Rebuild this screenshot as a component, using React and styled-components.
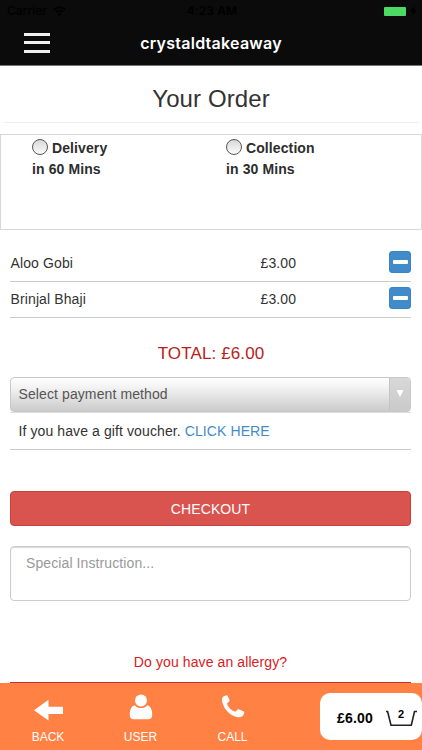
import React from "react";
import styled, { createGlobalStyle } from "styled-components";

const Global = createGlobalStyle`
  * { box-sizing: border-box; }
  html, body { margin: 0; padding: 0; }
  body {
    background: #fff;
    color: #333;
    font-family: "Liberation Sans", Arial, sans-serif;
    font-size: 14px;
    overflow: hidden;
  }
`;

const Screen = styled.div`
  width: 422px;
  height: 750px;
  display: flex;
  flex-direction: column;
  overflow: hidden;
  background: #fff;
`;

const StatusBar = styled.div`
  height: 22px;
  flex: none;
  background: #0b0b0b;
  color: #000;
  display: grid;
  grid-template-columns: 1fr auto 1fr;
  align-items: center;
  padding: 0 5px 0 7px;
  font: 500 12px/22px Inter, sans-serif;
`;

const Carrier = styled.div`
  display: flex;
  align-items: center;
  gap: 6px;
`;

const Clock = styled.div`
  font-weight: 600;
  letter-spacing: 0.1px;
`;

const Power = styled.div`
  display: flex;
  justify-content: flex-end;
  align-items: center;
  gap: 4px;
`;

const Battery = styled.span`
  width: 22px;
  height: 9px;
  border-radius: 1px;
  background: #4cd964;
`;

const Header = styled.header`
  height: 44px;
  flex: none;
  display: grid;
  grid-template-columns: 76px 1fr 76px;
  align-items: center;
  background: #0b0b0b;
  border-bottom: 1px solid #777;
  padding-bottom: 2px;
  color: #fff;
`;

const MenuButton = styled.button`
  border: 0;
  background: none;
  padding: 0 0 0 23.5px;
  height: 20px;
  width: 50px;
  display: flex;
  flex-direction: column;
  justify-content: space-between;
`;

const MenuBar = styled.span`
  width: 26px;
  height: 3px;
  background: #f0f0f0;
`;

const AppName = styled.div`
  text-align: center;
  font: 600 16px/20px Inter, sans-serif;
  letter-spacing: 0.25px;
  white-space: nowrap;
`;

const Content = styled.main`
  flex: 1;
  display: flex;
  flex-direction: column;
  min-height: 0;
`;

const Title = styled.h1`
  margin: 0 3px;
  height: 57px;
  padding-top: 19px;
  border-bottom: 1px solid #eee;
  font-size: 24px;
  line-height: 28px;
  font-weight: 400;
  letter-spacing: 0.1px;
  text-align: center;
`;

const Methods = styled.section`
  height: 97px;
  margin: 11px 0 0;
  padding: 3px 0 0 31px;
  border: 1px solid #d8d8d8;
  display: grid;
  grid-template-columns: 194px 1fr;
  align-items: start;
`;

const Method = styled.label`
  font-weight: 700;
  line-height: 21px;
  letter-spacing: 0.1px;
  color: #2d2d2d;
`;

const MethodName = styled.div`
  display: flex;
  align-items: center;
  gap: 4px;
`;

const Radio = styled.span`
  width: 16px;
  height: 16px;
  margin-top: -3px;
  border: 1px solid #555;
  border-radius: 50%;
  background: linear-gradient(#d9d9d9, #fafafa);
`;

const Items = styled.div`
  margin: 16px 11px 0 10px;
`;

const Item = styled.div`
  height: 36px;
  display: grid;
  grid-template-columns: 250px 1fr 22px;
  align-items: center;
  border-bottom: 1px solid #ccc;
  letter-spacing: 0.12px;
`;

const ItemText = styled.span`
  padding: 0 0 1px 0.5px;
`;

const RemoveButton = styled.button`
  width: 22px;
  height: 22px;
  margin-top: -3px;
  padding: 0 0 1px;
  border: 1px solid #3d84c3;
  border-radius: 3px;
  background: #428bca;
  display: flex;
  align-items: center;
  justify-content: center;
`;

const Minus = styled.span`
  width: 15px;
  height: 4px;
  border-radius: 1px;
  background: #fff;
`;

const Total = styled.div`
  margin-top: 24px;
  height: 24px;
  line-height: 24px;
  font-size: 17px;
  letter-spacing: 0.12px;
  text-align: center;
  color: #b9201b;
`;

const Select = styled.div`
  height: 35px;
  margin: 11px 11px 0 10px;
  display: flex;
  border: 1px solid #c8c8c8;
  border-radius: 4px;
  overflow: hidden;
  background: linear-gradient(#fff, #f2f2f2 30%, #cbcbcb);
  color: #555;
`;

const SelectText = styled.span`
  flex: 1;
  padding-left: 7.5px;
  line-height: 32px;
  letter-spacing: 0.1px;
`;

const SelectArrow = styled.span`
  width: 21px;
  border-left: 1px solid #c4c4c4;
  background: linear-gradient(#d8d8d8, #cacaca);
  display: flex;
  justify-content: center;
  padding-top: 12px;
`;

const Voucher = styled.div`
  height: 38px;
  margin: 0 11px 0 10px;
  padding-left: 8.5px;
  line-height: 36px;
  letter-spacing: 0.1px;
  border-top: 1px solid #ddd;
  border-bottom: 1px solid #ccc;
`;

const Link = styled.a`
  color: #428bca;
`;

const Checkout = styled.button`
  height: 35px;
  margin: 41px 11px 0 10px;
  flex: none;
  border: 1px solid #c9413d;
  border-radius: 4px;
  background: #d9534f;
  color: #fff;
  font: 14px/20px "Liberation Sans", Arial, sans-serif;
  letter-spacing: 0.12px;
`;

const Instruction = styled.textarea`
  height: 55px;
  flex: none;
  margin: 20px 11px 0 10px;
  padding: 6px 15px;
  resize: none;
  outline: none;
  border: 1px solid #ccc;
  border-radius: 4px;
  box-shadow: inset 0 1px 1px rgba(0, 0, 0, 0.16);
  font: 14px/20px "Liberation Sans", Arial, sans-serif;
  letter-spacing: 0.1px;
  &::placeholder { color: #999; }
`;

const Allergy = styled.div`
  margin: 51px 11px 0 10px;
  height: 31px;
  line-height: 21px;
  letter-spacing: 0.1px;
  text-align: center;
  color: #d9201c;
  border-bottom: 1px solid #c9302c;
`;

const Footer = styled.footer`
  height: 67px;
  flex: none;
  display: grid;
  grid-template-columns: 96px 89px 95px 1fr;
  background: #ff8144;
`;

const NavItem = styled.button`
  border: 0;
  background: none;
  padding: 8px 0 0;
  color: #fff;
  font: 12px/16px "Liberation Sans", Arial, sans-serif;
  display: flex;
  flex-direction: column;
  align-items: center;
  gap: 6px;
  svg { height: 32px; }
`;

const Basket = styled.div`
  margin: 10px 0 0 40px;
  width: 102px;
  height: 47px;
  border-radius: 10px;
  background: #fff;
  color: #000;
  display: flex;
  align-items: center;
  padding: 2px 0 0 17px;
  font-weight: 700;
`;

const BasketPrice = styled.span`
  width: 49px;
  letter-spacing: 0.2px;
`;

const items = [
  { name: "Aloo Gobi", price: "£3.00" },
  { name: "Brinjal Bhaji", price: "£3.00" },
];

export default function App() {
  return (
    <>
      <Global />
      <Screen>
        <StatusBar>
          <Carrier>
            Carrier
            <svg width="13" height="10" viewBox="0 0 13 10" fill="none" stroke="#000" strokeWidth="1.8">
              <path d="M1 3.6a8 8 0 0 1 11 0M3 6a5 5 0 0 1 7 0" />
              <circle cx="6.5" cy="8.3" r=".6" />
            </svg>
          </Carrier>
          <Clock>4:23 AM</Clock>
          <Power>
            <Battery />
            <svg width="7" height="10" viewBox="0 0 7 10" fill="#000">
              <path d="M4.8 0 0 5.6h2.8L2 10l5-6H4z" />
            </svg>
          </Power>
        </StatusBar>
        <Header>
          <MenuButton aria-label="Menu">
            <MenuBar />
            <MenuBar />
            <MenuBar />
          </MenuButton>
          <AppName>crystaldtakeaway</AppName>
        </Header>
        <Content>
          <Title>Your Order</Title>
          <Methods>
            <Method>
              <MethodName><Radio />Delivery</MethodName>
              in 60 Mins
            </Method>
            <Method>
              <MethodName><Radio />Collection</MethodName>
              in 30 Mins
            </Method>
          </Methods>
          <Items>
            {items.map((item) => (
              <Item key={item.name}>
                <ItemText>{item.name}</ItemText>
                <ItemText>{item.price}</ItemText>
                <RemoveButton aria-label="Remove"><Minus /></RemoveButton>
              </Item>
            ))}
          </Items>
          <Total>TOTAL: £6.00</Total>
          <Select>
            <SelectText>Select payment method</SelectText>
            <SelectArrow>
              <svg width="8" height="7" viewBox="0 0 8 7"><path d="M.5 0h7L4 7z" fill="#fff" /></svg>
            </SelectArrow>
          </Select>
          <Voucher>If you have a gift voucher. <Link>CLICK HERE</Link></Voucher>
          <Checkout>CHECKOUT</Checkout>
          <Instruction placeholder="Special Instruction..." />
          <Allergy>Do you have an allergy?</Allergy>
        </Content>
        <Footer>
          <NavItem>
            <svg width="29" viewBox="0 0 29 32" fill="#fff">
              <path d="M0 19.2 14.500 8.800v7H29v7.200H14.500v6.600z" />
            </svg>
            BACK
          </NavItem>
          <NavItem>
            <svg width="24" viewBox="0 0 24 32" fill="#fff">
              <circle cx="12" cy="9.400" r="6" />
              <path d="M5.600 14.200C2.300 15.200.8 18.700.8 23.200v1c0 2.500 1.500 4 4 4h14.400c2.500 0 4-1.500 4-4v-1c0-4.500-1.500-8-4.800-9-1.500 1.900-3.700 2.800-6.400 2.800s-4.800-.9-6.400-2.800z" />
            </svg>
            USER
          </NavItem>
          <NavItem>
            <svg width="24" viewBox="0 0 24 32" fill="#fff">
              <path transform="translate(0 .3)" d="M1 8.200C1 5.500 3.600 4.300 5.600 4c.8 0 1 .5 1.300 1.200l1.500 3.300c.4 1 .1 1.400-.6 2l-1.300 1.200c-.5.6-.4 1.100 0 1.900 1.400 2.800 3.600 5 6.400 6.400.8.4 1.300.5 1.900 0l1.700-1.600c.6-.6 1.100-.6 1.900-.2l3.800 1.800c.8.4 1.200.7 1 1.600-.5 2.500-2.600 4.400-5.200 4.400C9.500 26 1 16 1 8.200z" />
            </svg>
            CALL
          </NavItem>
          <Basket>
            <BasketPrice>£6.00</BasketPrice>
            <svg width="32" height="20" viewBox="0 0 32 20">
              <path d="M0 3.500h1.600L5 17.300h20.300l3.200-13.800H31" fill="none" stroke="#222" strokeWidth="1.600" />
              <text x="15" y="10.300" textAnchor="middle" fontFamily="Liberation Sans" fontWeight="700" fontSize="11">2</text>
            </svg>
          </Basket>
        </Footer>
      </Screen>
    </>
  );
}
